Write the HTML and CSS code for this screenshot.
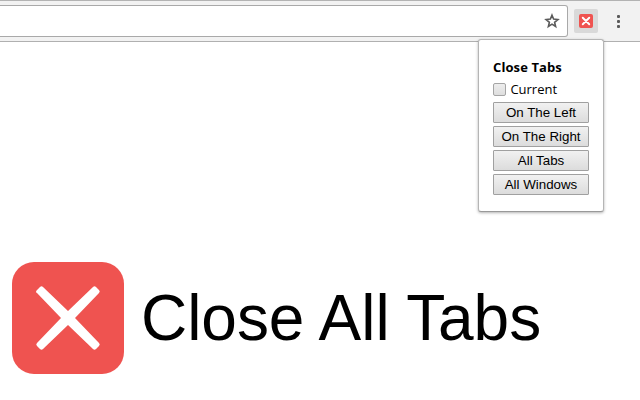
FILE: index.html
```
<!DOCTYPE html>
<html lang="en">
<head>
<meta charset="utf-8">
<title>Close All Tabs</title>
<link rel="stylesheet" href="styles.css">
</head>
<body>
<header class="toolbar">
  <div class="omnibox">
    <svg class="star" width="16" height="16" viewBox="0 0 16 16"><path d="M8 2.200 9.600 6.100 13.900 6.500 10.600 9.300 11.600 13.500 8 11.200 4.400 13.500 5.400 9.300 2.100 6.500 6.400 6.100Z"/></svg>
  </div>
  <div class="extension">
    <svg width="14" height="14" viewBox="0 0 112 112"><rect class="tile" width="112" height="112" rx="16"/><path class="cross cross-small" d="M30 30 82 82M82 30 30 82"/></svg>
  </div>
  <div class="menu"><i></i><i></i><i></i></div>
</header>
<main class="hero">
  <svg width="112" height="112" viewBox="0 0 112 112"><rect class="tile" width="112" height="112" rx="22"/><path class="cross" d="M24 30Q24 29 25 28L28 25Q29.500 23.500 31 25L56 49 81 25Q82.500 23.500 84 25L87 28Q88.500 29.500 87 31L63 56 87 81Q88.500 82.500 87 84L84 87Q82.500 88.500 81 87L56 63 31 87Q29.500 88.500 28 87L25 84Q23.500 82.500 25 81L49 56 25 31Q24 30.500 24 30Z"/></svg>
  <h1>Close All Tabs</h1>
</main>
<section class="popup">
  <h2>Close Tabs</h2>
  <label class="current"><input type="checkbox"><span>Current</span></label>
  <button>On The Left</button>
  <button>On The Right</button>
  <button>All Tabs</button>
  <button>All Windows</button>
</section>
</body>
</html>
```
FILE: styles.css
```
* { box-sizing: border-box; }
body {
  position: relative;
  margin: 0;
  width: 640px;
  height: 400px;
  overflow: hidden;
  background: #fff;
  color: #000;
  font-family: "Liberation Sans", Arial, sans-serif;
}
svg { display: block; }
.toolbar {
  display: flex;
  align-items: center;
  height: 42px;
  background: #f2f2f2;
  border-top: 1px solid #b3b3b3;
  border-bottom: 1px solid #b0b0b0;
}
.omnibox {
  display: flex;
  align-items: center;
  justify-content: flex-end;
  width: 568px;
  height: 32px;
  padding-right: 7px;
  background: #fff;
  border: 1px solid #a9a9a9;
  border-left: 0;
  border-radius: 0 3px 3px 0;
}
.star path { fill: none; stroke: #5a5a5a; stroke-width: 1.6; }
.extension {
  display: grid;
  place-items: center;
  width: 24px;
  height: 24px;
  margin-left: 6px;
  background: #d9d9d9;
  border-radius: 2px;
}
.tile { fill: #ef5350; }
.cross { fill: #fff; }
.cross-small { fill: none; stroke: #fff; stroke-width: 15; stroke-linecap: round; }
.menu {
  display: flex;
  flex-direction: column;
  gap: 2px;
  margin-left: 19px;
}
.menu i { width: 3px; height: 3px; border-radius: 1px; background: #5a5a5a; }
.hero {
  display: flex;
  align-items: center;
  gap: 17px;
  padding: 220px 0 0 12px;
}
h1 { margin: 0; font-size: 64px; line-height: 74px; font-weight: 400; letter-spacing: -0.05px; white-space: nowrap; }
.popup {
  position: absolute;
  left: 478px;
  top: 39px;
  width: 126px;
  height: 173px;
  padding: 18px 14px 0;
  display: flex;
  flex-direction: column;
  gap: 3px;
  background: #fff;
  border: 1px solid #b5b5b5;
  border-bottom-color: #999;
  border-radius: 3px;
  box-shadow: 0 1px 3px rgba(0, 0, 0, .3);
  font-family: "Open Sans", sans-serif;
  font-size: 13px;
}
h2 { margin: 0; font-size: 13px; line-height: 18px; font-weight: 700; letter-spacing: 0.1px; white-space: nowrap; }
.current { display: flex; align-items: flex-start; gap: 4.4px; height: 20px; line-height: 21px; }
.current input {
  appearance: none;
  width: 13px;
  height: 13px;
  margin: 4px 0 0;
  border: 1px solid #a5a5a5;
  border-radius: 2px;
  background: linear-gradient(#ededed, #dedede);
}
button {
  width: 96px;
  height: 21px;
  padding: 0;
  border: 1px solid #a0a0a0;
  border-radius: 1px;
  background: linear-gradient(#f1f1f1, #dcdcdc);
  color: #000;
  font: 13.333px/19px "Liberation Sans", Arial, sans-serif;
  white-space: nowrap;
}
```
